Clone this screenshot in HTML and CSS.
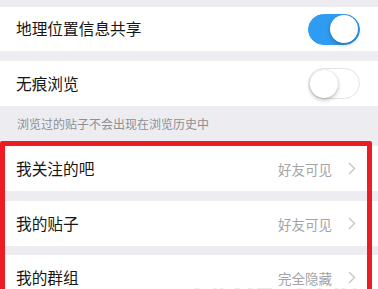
FILE: index.html
```html
<!DOCTYPE html>
<html lang="zh-CN">
<head>
<meta charset="utf-8">
<link rel="stylesheet" href="styles.css">
</head>
<body>
<div class="page">
  <div class="top-gap"></div>
  <div class="row row-first">
    <span class="label">地理位置信息共享</span>
    <span class="toggle on"><span class="knob"></span></span>
  </div>
  <div class="gap"></div>
  <div class="row">
    <span class="label">无痕浏览</span>
    <span class="toggle"><span class="knob"></span></span>
  </div>
  <div class="note">浏览过的贴子不会出现在浏览历史中</div>
  <div class="group">
    <div class="row">
      <span class="label">我关注的吧</span>
      <span class="value">好友可见<svg class="chev" width="8" height="13" viewBox="0 0 8 13"><path d="M1 1 L6.5 6.5 L1 12" fill="none" stroke="#c4c4c9" stroke-width="1.4"/></svg></span>
    </div>
    <div class="gap"></div>
    <div class="row">
      <span class="label">我的贴子</span>
      <span class="value">好友可见<svg class="chev" width="8" height="13" viewBox="0 0 8 13"><path d="M1 1 L6.5 6.5 L1 12" fill="none" stroke="#c4c4c9" stroke-width="1.4"/></svg></span>
    </div>
    <div class="gap gap-last"></div>
    <div class="row">
      <span class="label">我的群组</span>
      <span class="value">完全隐藏<svg class="chev" width="8" height="13" viewBox="0 0 8 13"><path d="M1 1 L6.5 6.5 L1 12" fill="none" stroke="#c4c4c9" stroke-width="1.4"/></svg></span>
    </div>
    <div class="highlight"></div>
  </div>
  <div class="watermark">anxz.com</div>
</div>
</body>
</html>
```

FILE: styles.css
```css
html, body {
  margin: 0;
  padding: 0;
}
body {
  background: #ededf1;
  font-family: "Noto Sans CJK SC", "Noto Sans", sans-serif;
  width: 378px;
  height: 289px;
  overflow: hidden;
}
.page {
  position: relative;
  width: 378px;
  height: 289px;
  overflow: hidden;
}
.top-gap {
  height: 7px;
}
.gap {
  height: 10px;
}
.gap-last {
  height: 9px;
}
.row {
  height: 45px;
  background: #ffffff;
  display: flex;
  align-items: center;
  justify-content: space-between;
  padding: 0 18px 0 16px;
}
.row-first {
  height: 44px;
}
.label {
  font-size: 15.7px;
  color: #161616;
  line-height: 1;
}
.toggle {
  width: 52px;
  height: 31px;
  box-sizing: border-box;
  border-radius: 16px;
  background: #ffffff;
  border: 1.5px solid #e3e3e6;
  display: flex;
  align-items: center;
  padding: 0 1px;
}
.toggle.on {
  background: #2e9cf3;
  border-color: #2e9cf3;
  justify-content: flex-end;
}
.knob {
  width: 28px;
  height: 28px;
  border-radius: 50%;
  background: #ffffff;
  box-shadow: 0 2px 4px rgba(0, 0, 0, 0.25), 0 0 1px rgba(0, 0, 0, 0.2);
}
.note {
  height: 35px;
  display: flex;
  align-items: center;
  padding: 0 17px;
  font-size: 12px;
  color: #8e8e93;
}
.group {
  position: relative;
  padding-top: 5px;
}
.group .row {
  padding-right: 22px;
}
.value {
  display: flex;
  align-items: center;
  gap: 16px;
  font-size: 13.5px;
  color: #a3a3a8;
}
.highlight {
  position: absolute;
  left: 0;
  top: 0;
  width: 372px;
  height: 200px;
  box-sizing: border-box;
  border: 5px solid #ec1c24;
  border-radius: 2px;
  pointer-events: none;
}
.watermark {
  position: absolute;
  left: 188px;
  top: 280px;
  font-family: "DejaVu Sans", sans-serif;
  font-size: 32px;
  letter-spacing: 3px;
  color: transparent;
  -webkit-text-stroke: 1px #dcdce0;
  line-height: 1;
}
```
